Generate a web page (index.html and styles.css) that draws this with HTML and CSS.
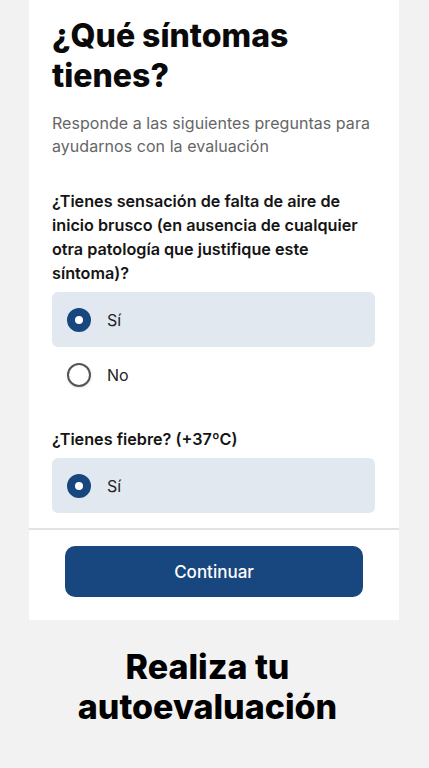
FILE: index.html
```html
<!DOCTYPE html>
<html lang="es">
<head>
<meta charset="utf-8">
<title>Autoevaluación</title>
<link rel="stylesheet" href="styles.css">
</head>
<body>
<main class="card">
  <div class="content">
    <h1 class="title">¿Qué síntomas tienes?</h1>
    <p class="subtitle">Responde a las siguientes preguntas para ayudarnos con la evaluación</p>

    <section class="question">
      <h2 class="q-text">¿Tienes sensación de falta de aire de inicio brusco (en ausencia de cualquier otra patología que justifique este síntoma)?</h2>
      <div class="option selected"><span class="radio"></span><span class="opt-label">Sí</span></div>
      <div class="option"><span class="radio"></span><span class="opt-label">No</span></div>
    </section>

    <section class="question q2">
      <h2 class="q-text">¿Tienes fiebre? (+37ºC)</h2>
      <div class="option selected"><span class="radio"></span><span class="opt-label">Sí</span></div>
    </section>
  </div>
  <div class="footer">
    <button class="btn">Continuar</button>
  </div>
</main>
<h2 class="caption">Realiza tu<br>autoevaluación</h2>
</body>
</html>
```
FILE: styles.css
```css
* { box-sizing: border-box; }
body {
  margin: 0;
  background: #f2f2f2;
  font-family: Inter, "Noto Sans", sans-serif;
  color: #111;
  width: 429px;
  height: 768px;
  overflow: hidden;
}
.card {
  margin: 0 30px 0 29px;
  background: #fff;
}
.content {
  padding: 16px 24px 15px 23px;
}
.title {
  margin: 0;
  font-size: 32px;
  line-height: 40px;
  font-weight: 800;
  color: #0a0a0a;
}
.subtitle {
  margin: 16px 0 0;
  font-size: 16px;
  line-height: 23px;
  letter-spacing: 0.05px;
  color: #666;
}
.question { margin-top: 31px; }
.question.q2 { margin-top: 25px; }
.q-text {
  margin: 0 0 7px;
  font-size: 16.2px;
  line-height: 24px;
  font-weight: 600;
  color: #151515;
}
.option {
  display: flex;
  align-items: center;
  height: 55px;
  padding-left: 15px;
  border-radius: 6px;
}
.option.selected { background: #e1e8f0; }
.radio {
  flex: none;
  width: 24px;
  height: 24px;
  border-radius: 50%;
  border: 2px solid #555;
  background: #fff;
  box-shadow: 0 1px 3px rgba(0,0,0,0.1);
}
.option.selected .radio {
  border: 8px solid #18467e;
  box-shadow: none;
}
.opt-label {
  margin-left: 16px;
  font-size: 16px;
  color: #222;
}
.footer {
  border-top: 2px solid #e2e2e2;
  padding: 16px 36px 23px;
  display: flex;
}
.btn {
  flex: 1;
  height: 51px;
  border: 0;
  border-radius: 10px;
  background: #18467e;
  color: #fff;
  font-family: Inter, sans-serif;
  font-size: 17px;
  font-weight: 500;
}
.caption {
  margin: 27px 0 0;
  padding-right: 14px;
  text-align: center;
  font-size: 34px;
  line-height: 40px;
  font-weight: 800;
  color: #000;
}
```
